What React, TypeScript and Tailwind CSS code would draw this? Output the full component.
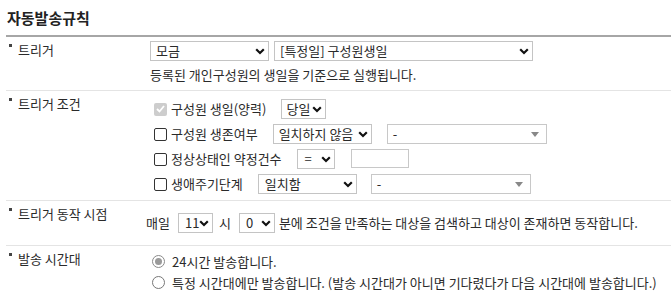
import React from 'react'

const font = "font-['Noto_Sans_CJK_KR','Noto_Sans',sans-serif]"

function Chevron() {
  return (
    <svg width="10" height="7" viewBox="0 0 10 7" className="shrink-0">
      <polyline points="1.2,1.3 5,5 8.8,1.3" fill="none" stroke="#111" strokeWidth="2.2" />
    </svg>
  )
}

function Select({ w, text, pl = 'pl-[5px]' }: { w: string; text: string; pl?: string }) {
  return (
    <div className={`${w} h-[20px] border border-[#c4c4c4] bg-white flex items-center justify-between ${pl} pr-[3px] shrink-0`}>
      <span className="leading-[18px] whitespace-nowrap">{text}</span>
      <Chevron />
    </div>
  )
}

function Combo({ w }: { w: string }) {
  return (
    <div className={`${w} h-[20px] border border-[#c8c8c8] bg-white flex items-center justify-between pl-[5px] pr-[7px] shrink-0`}>
      <span className="leading-[18px]">-</span>
      <svg width="8" height="5" viewBox="0 0 8 5">
        <polygon points="0,0 8,0 4,5" fill="#888" />
      </svg>
    </div>
  )
}

function Check({ disabled = false }: { disabled?: boolean }) {
  if (disabled)
    return (
      <div className="w-[13px] h-[13px] rounded-[2px] bg-[#cdcdcd] flex items-center justify-center shrink-0">
        <svg width="9" height="8" viewBox="0 0 9 8">
          <polyline points="1,4 3.5,6.5 8,1" fill="none" stroke="#fff" strokeWidth="1.8" />
        </svg>
      </div>
    )
  return <div className="w-[13px] h-[13px] rounded-[2px] border border-[#333] bg-white shrink-0" />
}

function Radio({ checked = false }: { checked?: boolean }) {
  return (
    <div
      className={`w-[13px] h-[13px] rounded-full border flex items-center justify-center shrink-0 ${
        checked ? 'border-[#8a8a8a]' : 'border-[#777]'
      }`}
    >
      {checked && <div className="w-[7px] h-[7px] rounded-full bg-[#9a9a9a]" />}
    </div>
  )
}

function Label({ text, w = 'w-[144px]' }: { text: string; w?: string }) {
  return (
    <div className={`${w} shrink-0 pl-[3px] pt-[5px] flex items-start`}>
      <span className="w-[3px] h-[3px] bg-[#444] mt-[2px] mr-[6px]" />
      <span className="leading-[16px]">{text}</span>
    </div>
  )
}

export default function App() {
  return (
    <div className={`w-[671px] h-[295px] bg-white text-[13px] text-[#2a2a2a] ${font} overflow-hidden`}>
      <div className="pl-[6px]">
        <h2 className="h-[35px] flex items-center pl-[1px] pt-[2px] text-[15px] font-bold text-[#222]">
          자동발송규칙
        </h2>

        <div className="border-t-2 border-[#a6a6a6]">
          {/* 트리거 */}
          <div className="flex border-b border-[#e4e4e4]">
            <Label text="트리거" />
            <div className="pt-[4px] pb-[7px]">
              <div className="flex gap-[5px]">
                <Select w="w-[119px]" text="모금" />
                <Select w="w-[259px]" text="[특정일] 구성원생일" />
              </div>
              <p className="mt-[6px] leading-[16px]">등록된 개인구성원의 생일을 기준으로 실행됩니다.</p>
            </div>
          </div>

          {/* 트리거 조건 */}
          <div className="flex border-b border-[#e4e4e4]">
            <Label text="트리거 조건" />
            <div className="pt-[8px] pb-[6px] pl-[4px] flex flex-col gap-[5px]">
              <div className="h-[20px] flex items-center">
                <Check disabled />
                <span className="ml-[4px] leading-[16px]">구성원 생일(양력)</span>
                <div className="ml-[15px]">
                  <Select w="w-[45px]" text="당일" pl="pl-[4px]" />
                </div>
              </div>
              <div className="h-[20px] flex items-center">
                <Check />
                <span className="ml-[4px] leading-[16px]">구성원 생존여부</span>
                <div className="ml-[15px] flex gap-[15px]">
                  <Select w="w-[99px]" text="일치하지 않음" />
                  <Combo w="w-[160px]" />
                </div>
              </div>
              <div className="h-[20px] flex items-center">
                <Check />
                <span className="ml-[4px] leading-[16px]">정상상태인 약정건수</span>
                <div className="ml-[15px] flex gap-[16px]">
                  <Select w="w-[38px]" text="=" pl="pl-[7px]" />
                  <div className="w-[58px] h-[19px] border border-[#c8c8c8] bg-white" />
                </div>
              </div>
              <div className="h-[20px] flex items-center">
                <Check />
                <span className="ml-[4px] leading-[16px]">생애주기단계</span>
                <div className="ml-[15px] flex gap-[14px]">
                  <Select w="w-[99px]" text="일치함" pl="pl-[6px]" />
                  <Combo w="w-[160px]" />
                </div>
              </div>
            </div>
          </div>

          {/* 트리거 동작 시점 */}
          <div className="flex border-b border-[#e4e4e4]">
            <Label text="트리거 동작 시점" w="w-[140px]" />
            <div className="pt-[6px] pb-[6px] flex items-center h-[32px] box-content">
              <span className="leading-[16px]">매일</span>
              <div className="ml-[8px]">
                <Select w="w-[35px]" text="11" pl="pl-[6px]" />
              </div>
              <span className="ml-[6px] leading-[16px]">시</span>
              <div className="ml-[8px]">
                <Select w="w-[36px]" text="0" pl="pl-[6px]" />
              </div>
              <span className="ml-[4px] leading-[16px] whitespace-nowrap">
                분에 조건을 만족하는 대상을 검색하고 대상이 존재하면 동작합니다.
              </span>
            </div>
          </div>

          {/* 발송 시간대 */}
          <div className="flex border-b border-[#e4e4e4]">
            <Label text="발송 시간대" w="w-[146px]" />
            <div className="pt-[5px] pb-[8px]">
              <div className="h-[21px] flex items-center">
                <Radio checked />
                <span className="ml-[7px] leading-[16px]">24시간 발송합니다.</span>
              </div>
              <div className="h-[21px] flex items-center">
                <Radio />
                <span className="ml-[7px] leading-[16px] whitespace-nowrap">
                  특정 시간대에만 발송합니다. (발송 시간대가 아니면 기다렸다가 다음 시간대에 발송합니다.)
                </span>
              </div>
            </div>
          </div>
        </div>
      </div>
    </div>
  )
}
